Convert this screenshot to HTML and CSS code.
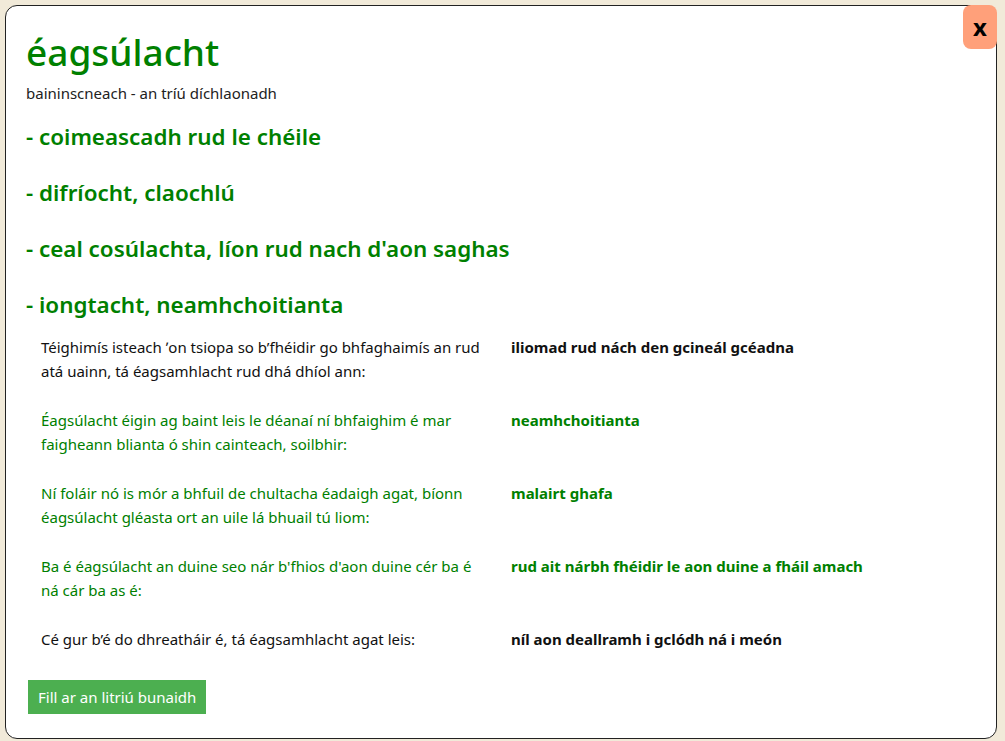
FILE: index.html
```html
<!DOCTYPE html>
<html lang="ga">
<head>
<meta charset="utf-8">
<title>éagsúlacht</title>
<link rel="stylesheet" href="styles.css">
</head>
<body>
<div class="modal">
  <button class="close">x</button>
  <h1 class="title">éagsúlacht</h1>
  <p class="sub">baininscneach - an tríú díchlaonadh</p>
  <h2 class="sense">- coimeascadh rud le chéile</h2>
  <h2 class="sense">- difríocht, claochlú</h2>
  <h2 class="sense">- ceal cosúlachta, líon rud nach d'aon saghas</h2>
  <h2 class="sense">- iongtacht, neamhchoitianta</h2>
  <table class="examples">
    <tr class="dark">
      <td class="ex">Téighimís isteach ʼon tsiopa so b’fhéidir go bhfaghaimís an rud atá uainn, tá éagsamhlacht rud dhá dhíol ann:</td>
      <td class="gloss">iliomad rud nách den gcineál gcéadna</td>
    </tr>
    <tr class="green">
      <td class="ex">Éagsúlacht éigin ag baint leis le déanaí ní bhfaighim é mar faigheann blianta ó shin cainteach, soilbhir:</td>
      <td class="gloss">neamhchoitianta</td>
    </tr>
    <tr class="green">
      <td class="ex">Ní foláir nó is mór a bhfuil de chultacha éadaigh agat, bíonn éagsúlacht gléasta ort an uile lá bhuail tú liom:</td>
      <td class="gloss">malairt ghafa</td>
    </tr>
    <tr class="green">
      <td class="ex">Ba é éagsúlacht an duine seo nár b'fhios d'aon duine cér ba é ná cár ba as é:</td>
      <td class="gloss">rud ait nárbh fhéidir le aon duine a fháil amach</td>
    </tr>
    <tr class="dark">
      <td class="ex">Cé gur b’é do dhreatháir é, tá éagsamhlacht agat leis:</td>
      <td class="gloss">níl aon deallramh i gclódh ná i meón</td>
    </tr>
  </table>
  <button class="back">Fill ar an litriú bunaidh</button>
</div>
</body>
</html>
```

FILE: styles.css
```css
html, body {
  margin: 0;
  padding: 0;
}
body {
  background: #f1ead9;
  font-family: "Noto Sans", "Open Sans", sans-serif;
  color: #222;
  padding: 5px 8px 2px 5px;
}
.modal {
  position: relative;
  box-sizing: border-box;
  height: 734px;
  background: #fff;
  border: 1px solid #222;
  border-radius: 12px;
  padding: 22px 20px 0 20px;
}
.close {
  position: absolute;
  top: -1px;
  right: -1px;
  width: 34px;
  height: 44px;
  border: none;
  border-radius: 8px;
  background: #ffa07a;
  font-family: "Noto Sans", sans-serif;
  font-weight: 700;
  font-size: 24px;
  line-height: 44px;
  padding: 0;
  color: #000;
}
.title {
  margin: 0;
  font-size: 37px;
  line-height: 48px;
  font-weight: 500;
  color: #008000;
}
.sub {
  margin: 5px 0 0 0;
  font-size: 15px;
  line-height: 24px;
  color: #222;
}
.sense {
  margin: 17px 0 0 0;
  font-size: 22.4px;
  line-height: 30px;
  font-weight: 600;
  color: #008000;
}
.sense + .sense {
  margin-top: 26px;
}
.examples {
  margin-top: 3px;
  border-collapse: collapse;
}
.examples td {
  padding: 12px 10px 13px 10px;
  font-size: 15px;
  line-height: 24px;
  vertical-align: top;
}
.examples td.ex {
  width: 450px;
  padding-left: 15px;
}
.examples td.gloss {
  font-weight: 700;
}
.dark td {
  color: #111;
}
.green td {
  color: #008000;
}
.back {
  margin: 16px 0 0 2px;
  padding: 0 10px;
  height: 34px;
  border: none;
  background: #4caf50;
  color: #fff;
  font-family: "Noto Sans", sans-serif;
  font-size: 15px;
}
```
